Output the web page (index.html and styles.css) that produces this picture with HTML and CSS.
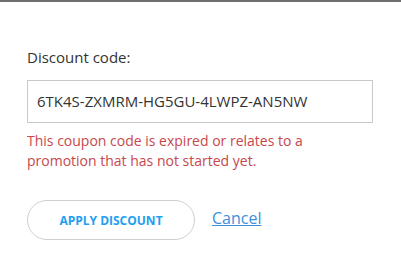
FILE: index.html
```html
<!DOCTYPE html>
<html>
<head>
<meta charset="utf-8">
<link rel="stylesheet" href="styles.css">
</head>
<body>
<div class="topbar"></div>
<div class="dialog">
  <label class="label" for="code">Discount code:</label>
  <div class="input">6TK4S-ZXMRM-HG5GU-4LWPZ-AN5NW</div>
  <p class="error">This coupon code is expired or relates to a promotion that has not started yet.</p>
  <div class="actions">
    <button class="apply">APPLY DISCOUNT</button>
    <a class="cancel" href="#">Cancel</a>
  </div>
</div>
</body>
</html>
```
FILE: styles.css
```css
html, body {
  margin: 0;
  padding: 0;
  background: #fff;
  font-family: "Open Sans", sans-serif;
}
.topbar {
  height: 2px;
  background: #6e6e6e;
}
.dialog {
  padding: 44px 28px 0 27px;
}
.label {
  display: block;
  font-size: 15px;
  line-height: 22px;
  color: #333;
}
.input {
  margin-top: 12px;
  height: 41px;
  border: 1px solid #c8c8c8;
  box-sizing: content-box;
  padding: 0 9px;
  font-size: 15px;
  line-height: 41px;
  color: #333;
}
.error {
  margin: 8px 0 0;
  font-size: 14px;
  line-height: 20px;
  color: #c8474b;
  padding-right: 40px;
}
.actions {
  margin-top: 29px;
  display: flex;
  align-items: center;
  gap: 17px;
}
.apply {
  width: 168px;
  height: 40px;
  border: 1px solid #cfcfcf;
  border-radius: 20px;
  background: #fff;
  color: #1e9ff2;
  font-family: "Open Sans", sans-serif;
  font-weight: 700;
  font-size: 12px;
  padding: 0;
}
.cancel {
  font-size: 16px;
  line-height: 20px;
  color: #3d8fdc;
  text-decoration: underline;
  margin-top: -4px;
}
```
